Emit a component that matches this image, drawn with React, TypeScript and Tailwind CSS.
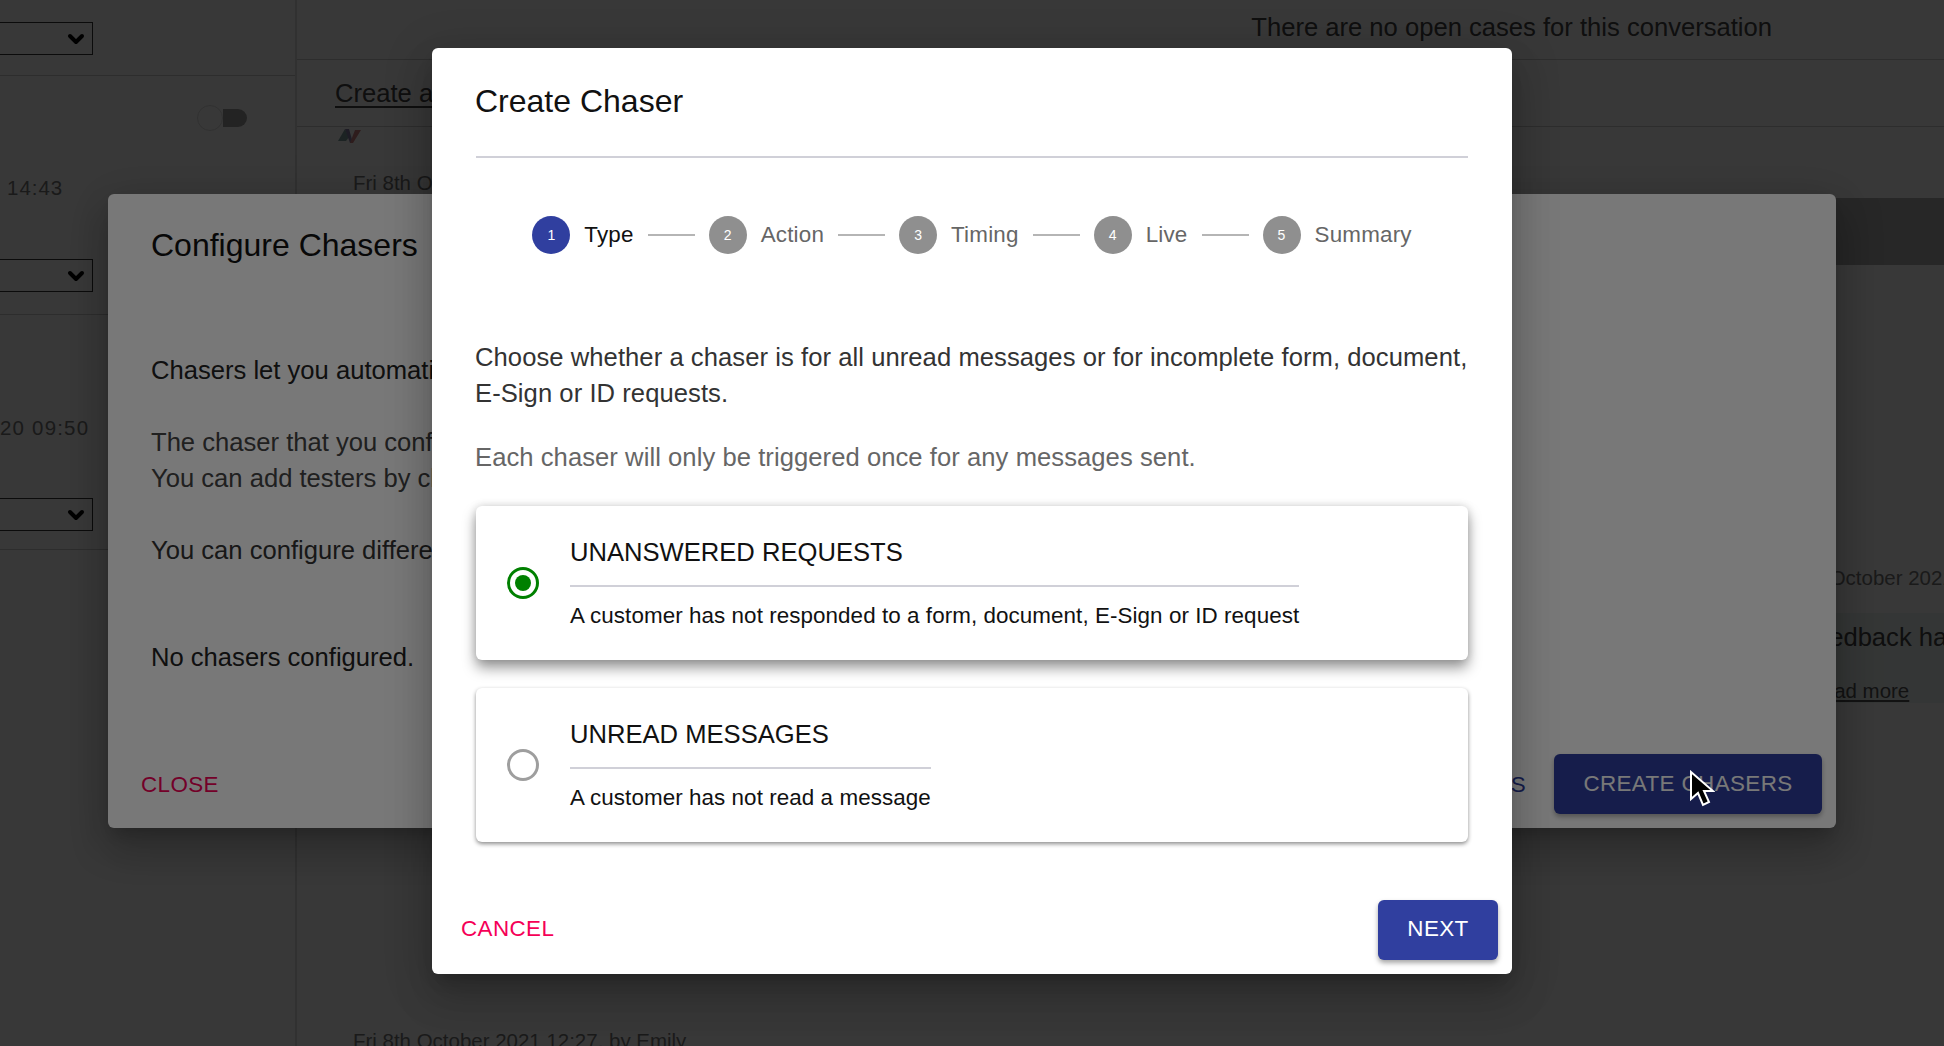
import { ChevronDown } from "lucide-react";

const STEPS = ["Type", "Action", "Timing", "Live", "Summary"];

const DIALOG_SHADOW =
  "shadow-[0_11px_15px_-7px_rgba(0,0,0,0.2),0_24px_38px_3px_rgba(0,0,0,0.14),0_9px_46px_8px_rgba(0,0,0,0.12)]";

function FakeSelect() {
  return (
    <div className="w-[93px] h-[33px] border border-l-0 border-[#333] flex items-center justify-end pr-[4px]">
      <ChevronDown size={24} strokeWidth={4} className="text-black" />
    </div>
  );
}

function BackgroundPage() {
  return (
    <div className="absolute inset-0 flex bg-white text-[#222]">
      {/* Conversation list, scrolled off to the left */}
      <aside className="w-[297px] shrink-0 border-r-2 border-[#ddd] flex flex-col">
        <div className="h-[76px] pt-[22px] border-b border-[#ccc] pr-[20px]">
          <FakeSelect />
        </div>
        <div className="h-[239px] border-b border-[#ccc] pr-[20px] flex flex-col">
          <div className="ml-[197px] mt-[31px] h-[22px] flex items-center">
            <div className="w-[26px] h-[26px] rounded-full border border-[#ddd]" />
            <div className="w-[24px] h-[18px] rounded-r-full bg-[#a0a0a0]" />
          </div>
          <p className="ml-[7px] mt-[46px] text-[20.48px] leading-[26px] text-[#777] tracking-[1px]">14:43</p>
          <div className="mt-[58px]">
            <FakeSelect />
          </div>
        </div>
        <div className="h-[235px] border-b border-[#ccc] pr-[20px] flex flex-col">
          <p className="mt-[100px] text-[20.48px] leading-[26px] text-[#777] tracking-[1.2px]">20 09:50</p>
          <div className="mt-[57px]">
            <FakeSelect />
          </div>
        </div>
      </aside>

      <main className="flex-1 flex flex-col min-w-0 overflow-hidden">
        <div className="h-[60px] shrink-0 border-b border-[#ccc] flex items-center justify-end pr-[172px]">
          <p className="text-[25.6px] leading-[32px] mb-[6px] text-[#444]">There are no open cases for this conversation</p>
        </div>
        <div className="h-[67px] shrink-0 border-b border-[#ccc] pl-[38px] pt-[18px]">
          <span className="text-[25.6px] leading-[30px] underline underline-offset-4 text-[#444]">Create a new case</span>
        </div>
        <div className="h-[71px] shrink-0 pl-[40px] flex flex-col">
          <svg width="24" height="18" viewBox="0 0 24 18" className="shrink-0">
            <path d="M1 14 8 2l4 8-3 4z" fill="#7fa0a0" />
            <path d="M8 2h4l4 14h-3z" fill="#8a80a8" />
            <path d="M13 16 18 3h6L16 16z" fill="#d08080" />
          </svg>
          <p className="ml-[16px] mt-[25px] text-[20.48px] leading-[26px] whitespace-nowrap text-[#777]">Fri 8th October 2021 14:43</p>
        </div>
        <div className="h-[67px] shrink-0 bg-[#b1b1b1]" />
        <div className="ml-[1409px] mt-[300px] w-[400px] shrink-0">
          <p className="ml-[60px] text-[20.48px] leading-[26px] whitespace-nowrap text-[#777]">Fri 8th October 2021</p>
          <div className="mt-[22px] h-[90px] w-[300px] bg-[#eef7f5] pt-[8px]">
            <p className="ml-[43px] text-[25.6px] leading-[32px] whitespace-nowrap text-[#444]">Your feedback has been received</p>
            <p className="ml-[102px] mt-[26px] text-[20.48px] leading-[24px] underline underline-offset-2 text-[#555]">Read more</p>
          </div>
        </div>
        <p className="mt-auto mb-[-8px] pl-[56px] text-[20.48px] leading-[26px] whitespace-nowrap text-[#777]">
          Fri 8th October 2021 12:27, by Emily
        </p>
      </main>
    </div>
  );
}

function ConfigureDialog() {
  return (
    <div className={`w-[1728px] h-[634px] rounded-[6px] bg-white flex flex-col ${DIALOG_SHADOW}`}>
      <div className="flex-1 px-[43px] pt-[32px]">
        <h2 className="text-[32px] leading-[38px] text-[#111]">Configure Chasers</h2>
        <div className="mt-[88px] text-[25.6px] leading-[36px] text-[#222]">
          <p>Chasers let you automatically follow up with customers who have not responded to requests or messages.</p>
          <p className="mt-[36px] text-[#444]">
            The chaser that you configure will first only be triggered for conversations with team members on the tester list.
            <br />
            You can add testers by clicking the manage testers button below.
          </p>
          <p className="mt-[36px] text-[#333]">You can configure different chasers for each type of request.</p>
          <p className="mt-[71px] text-[#222]">No chasers configured.</p>
        </div>
      </div>
      <div className="h-[74px] shrink-0 flex items-start justify-between pl-[33px] pr-[14px] pb-[15px]">
        <button className="h-[62px] text-[22.4px] text-[#f50057] tracking-[0.4px]">CLOSE</button>
        <div className="flex items-start gap-[28px]">
          <button className="h-[62px] text-[22.4px] text-[#303f9f] tracking-[0.4px]">MANAGE TESTERS</button>
          <button className="w-[268px] h-[60px] rounded-[6px] bg-[#303f9f] text-white text-[22.4px] tracking-[0.4px] shadow-[0_3px_5px_rgba(0,0,0,0.3)]">
            CREATE CHASERS
          </button>
        </div>
      </div>
    </div>
  );
}

function Stepper() {
  return (
    <div className="flex items-center justify-center mt-[58px] h-[38px]">
      {STEPS.map((label, i) => (
        <div key={label} className="flex items-center">
          {i > 0 && <div className="w-[47px] h-[2px] bg-[#b5b5b5] mx-[14px]" />}
          <div
            className={`w-[38px] h-[38px] rounded-full flex items-center justify-center text-[14px] text-white ${
              i === 0 ? "bg-[#303f9f]" : "bg-[#8f8f8f]"
            }`}
          >
            {i + 1}
          </div>
          <span className={`ml-[14px] text-[22.4px] leading-[30px] tracking-[0.2px] ${i === 0 ? "text-[#111]" : "text-[#666]"}`}>{label}</span>
        </div>
      ))}
    </div>
  );
}

function ChaserOption({
  selected,
  title,
  description,
  className,
}: {
  selected: boolean;
  title: string;
  description: string;
  className: string;
}) {
  return (
    <div className={`h-[154px] mx-[1px] rounded-[6px] bg-white flex items-center pl-[31px] ${className}`}>
      <div
        className={`w-[32px] h-[32px] rounded-full border-[3px] flex items-center justify-center shrink-0 ${
          selected ? "border-[#008000]" : "border-[#9e9e9e]"
        }`}
      >
        {selected && <div className="w-[16px] h-[16px] rounded-full bg-[#008000]" />}
      </div>
      <div className="ml-[31px] flex flex-col">
        <h3 className="text-[25.6px] leading-[32px] text-[#111]">{title}</h3>
        <div className="h-[2px] bg-[#d0d0d8] mt-[17px]" />
        <p className="text-[22.4px] leading-[30px] mt-[14px] tracking-[0.07px] text-[#111] whitespace-nowrap">{description}</p>
      </div>
    </div>
  );
}

function CreateChaserDialog() {
  return (
    <div className={`w-[1080px] h-[926px] rounded-[6px] bg-white flex flex-col ${DIALOG_SHADOW}`}>
      <div className="px-[43px] flex-1">
        <div className="pt-[31px] h-[110px] mx-[1px] border-b-2 border-[#d0d0d8]">
          <h2 className="text-[32px] leading-[44px] -ml-[1px] text-[#111]">Create Chaser</h2>
        </div>
        <Stepper />
        <p className="mt-[85px] text-[25.6px] leading-[36px] tracking-[0.06px] text-[#333]">
          Choose whether a chaser is for all unread messages or for incomplete form, document, E-Sign or ID requests.
        </p>
        <p className="mt-[28px] text-[25.6px] leading-[36px] tracking-[0.06px] text-[#666]">
          Each chaser will only be triggered once for any messages sent.
        </p>
        <div className="mt-[31px] flex flex-col gap-[28px]">
          <ChaserOption
            selected
            title="UNANSWERED REQUESTS"
            description="A customer has not responded to a form, document, E-Sign or ID request"
            className="shadow-[0_8px_14px_rgba(0,0,0,0.4),0_0_8px_rgba(0,0,0,0.15)]"
          />
          <ChaserOption
            selected={false}
            title="UNREAD MESSAGES"
            description="A customer has not read a message"
            className="shadow-[0_2px_4px_rgba(0,0,0,0.45)]"
          />
        </div>
      </div>
      <div className="h-[74px] mb-[7px] shrink-0 flex items-center justify-between pl-[29px] pr-[14px]">
        <button className="pb-[2px] text-[22.4px] text-[#f50057] tracking-[0.4px]">CANCEL</button>
        <button className="w-[120px] h-[60px] pb-[2px] rounded-[6px] bg-[#303f9f] text-white text-[22.4px] tracking-[0.4px] shadow-[0_3px_5px_rgba(0,0,0,0.35)]">
          NEXT
        </button>
      </div>
    </div>
  );
}

export default function App() {
  return (
    <div className="relative w-full h-screen overflow-hidden font-['Liberation_Sans',Arial,sans-serif]">
      <BackgroundPage />

      <div className="absolute inset-0 bg-black/[0.53] flex items-center justify-center pb-[24px]">
        <ConfigureDialog />
      </div>

      <div className="absolute inset-0 bg-black/[0.53] flex items-center justify-center pb-[24px]">
        <CreateChaserDialog />
      </div>

      {/* Mouse pointer left over from the screen capture */}
      <svg width="26" height="38" viewBox="0 0 26 38" className="absolute left-[1689px] top-[770px]">
        <path
          d="M2 2v27l7-6 5 12 6-3-5-11h9z"
          fill="#000"
          stroke="#fff"
          strokeWidth="2"
          strokeLinejoin="miter"
        />
      </svg>
    </div>
  );
}
